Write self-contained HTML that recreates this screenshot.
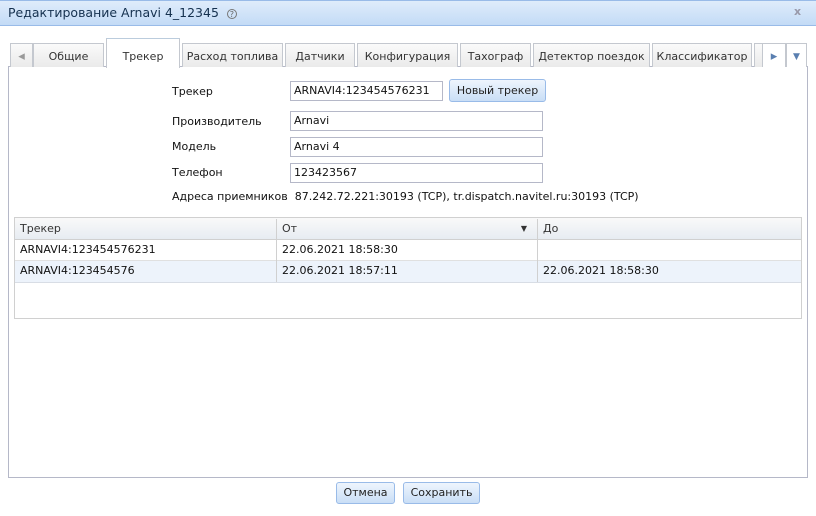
<!DOCTYPE html><html><head><style>
*{box-sizing:border-box;margin:0;padding:0}
body{width:816px;height:516px;background:#fff;font:11px "DejaVu Sans","Liberation Sans",sans-serif;color:#111;position:relative;overflow:hidden}
.a{position:absolute;white-space:nowrap}
.title{left:0;top:0;width:816px;height:26px;background:linear-gradient(#dfecfb,#c3dbf6);border-bottom:1px solid #99bbe8;border-top:1px solid #99bbe8}
.tab{position:absolute;top:43px;height:24px;border:1px solid #c4c8cf;border-bottom:none;background:linear-gradient(#fafafa,#eaeaea);text-align:center;line-height:26px;color:#333}
.inp{position:absolute;height:20px;border:1px solid #b5b8c8;padding-left:3px;line-height:18px;background:#fff}
.btn{position:absolute;border:1px solid #99bbe8;border-radius:3px;background:linear-gradient(#eef5fd,#c9def6);text-align:center;color:#222}
.cell{position:absolute;height:21px;line-height:20px;padding-left:5px;border-right:1px solid #d0d0d0}
</style></head><body>
<div class="a title"></div>
<div class="a" style="left:8px;top:5px;font-size:12.5px;color:#15314f">Редактирование Arnavi 4_12345 <span style="color:#666;border:1px solid #777;border-radius:50%;display:inline-block;width:10px;height:10px;line-height:9px;text-align:center;font-size:8px;margin-left:4px">?</span></div>
<div class="a" style="left:794px;top:5px;color:#99a;font-weight:bold">x</div>

<div class="a" style="left:8px;top:66px;width:800px;height:412px;border:1px solid #b5b8c8"></div>
<div class="tab" style="left:10px;width:23px;color:#999;font-size:13px">◂</div>
<div class="tab" style="left:33px;width:71px">Общие</div>
<div class="tab" style="left:106px;top:38px;height:30px;width:74px;background:#fff;line-height:36px;border-color:#c4c8cf;border-top:1px solid #bcd">Трекер</div>
<div class="tab" style="left:182px;width:101px">Расход топлива</div>
<div class="tab" style="left:285px;width:70px">Датчики</div>
<div class="tab" style="left:357px;width:101px">Конфигурация</div>
<div class="tab" style="left:460px;width:71px">Тахограф</div>
<div class="tab" style="left:533px;width:117px">Детектор поездок</div>
<div class="tab" style="left:652px;width:100px">Классификатор</div>
<div class="tab" style="left:754px;width:10px"></div>
<div class="tab" style="left:762px;width:24px;color:#5a7fb0;background:#fff;font-size:13px">▸</div>
<div class="tab" style="left:786px;width:21px;color:#5a7fb0;background:#fff;font-size:9px">▼</div>

<div class="a" style="left:172px;top:85px">Трекер</div>
<div class="inp" style="left:290px;top:81px;width:153px">ARNAVI4:123454576231</div>
<div class="btn" style="left:449px;top:79px;width:97px;height:23px;line-height:21px">Новый трекер</div>
<div class="a" style="left:172px;top:115px">Производитель</div>
<div class="inp" style="left:290px;top:111px;width:253px">Arnavi</div>
<div class="a" style="left:172px;top:140px">Модель</div>
<div class="inp" style="left:290px;top:137px;width:253px">Arnavi 4</div>
<div class="a" style="left:172px;top:166px">Телефон</div>
<div class="inp" style="left:290px;top:163px;width:253px">123423567</div>
<div class="a" style="left:172px;top:190px">Адреса приемников&nbsp; 87.242.72.221:30193 (TCP), tr.dispatch.navitel.ru:30193 (TCP)</div>

<div class="a" style="left:14px;top:217px;width:788px;height:102px;border:1px solid #d0d0d0"></div>
<div class="a" style="left:15px;top:218px;width:786px;height:22px;background:linear-gradient(#f9f9f9,#e7ecf2);border-bottom:1px solid #d0d0d0"></div>
<div class="cell" style="left:15px;top:219px;width:262px;color:#333">Трекер</div>
<div class="cell" style="left:277px;top:219px;width:261px;color:#333">От<span style="position:absolute;right:10px;font-size:8px">▼</span></div>
<div class="cell" style="left:538px;top:219px;width:263px;color:#333;border-right:none">До</div>
<div class="a" style="left:15px;top:240px;width:786px;height:21px;border-bottom:1px solid #e0e0e0"></div>
<div class="cell" style="left:15px;top:240px;width:262px">ARNAVI4:123454576231</div>
<div class="cell" style="left:277px;top:240px;width:261px">22.06.2021 18:58:30</div>
<div class="a" style="left:15px;top:261px;width:786px;height:22px;background:#edf3fb;border-bottom:1px solid #d8dde5"></div>
<div class="cell" style="left:15px;top:261px;width:262px">ARNAVI4:123454576</div>
<div class="cell" style="left:277px;top:261px;width:261px">22.06.2021 18:57:11</div>
<div class="cell" style="left:538px;top:261px;width:263px;border-right:none">22.06.2021 18:58:30</div>

<div class="btn" style="left:336px;top:482px;width:59px;height:22px;line-height:20px">Отмена</div>
<div class="btn" style="left:403px;top:482px;width:77px;height:22px;line-height:20px">Сохранить</div>
</body></html>
